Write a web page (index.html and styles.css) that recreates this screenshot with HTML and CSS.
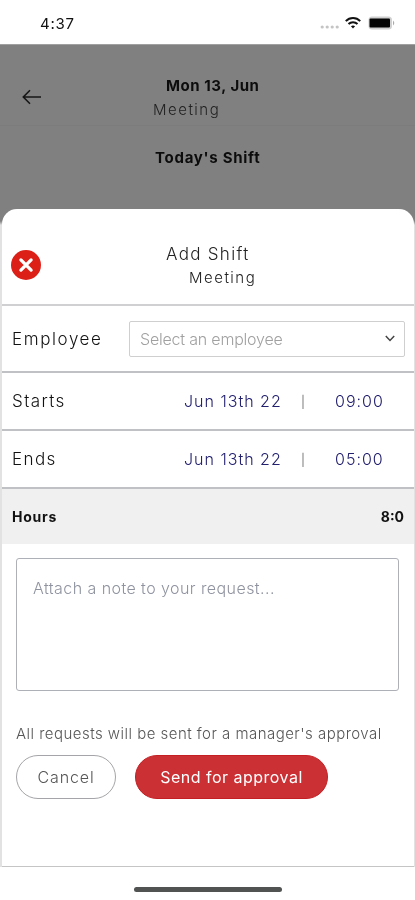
FILE: index.html
```html
<!DOCTYPE html>
<html lang="en">
<head>
<meta charset="utf-8">
<title>Add Shift</title>
<link rel="stylesheet" href="styles.css">
</head>
<body>
<div class="phone">
  <header class="status">
    <span class="clock">4:37</span>
    <div class="status-icons">
      <svg class="signal" width="20" height="14" viewBox="0 0 20 14" fill="#c4c4c4"><circle cx="2.2" cy="11" r="1.6"/><circle cx="7.2" cy="11" r="1.6"/><circle cx="12.2" cy="11" r="1.6"/><circle cx="17.2" cy="11" r="1.6"/></svg>
      <svg class="wifi" width="16" height="14" viewBox="0 0 16 14" fill="none" stroke="#111" stroke-width="2"><path d="M.8 5.1C4.8.9 11.200.9 15.200 5.100"/><path d="M3.500 8C6 5.500 10 5.500 12.500 8"/><path d="M5.900 10.200Q8 8.600 10.100 10.200L8 12.500Z" fill="#111" stroke="none"/></svg>
      <svg class="battery" width="27" height="14" viewBox="0 0 27 14"><rect x=".5" y=".5" width="23.500" height="13" rx="3.500" fill="#d0d0d0"/><path d="M25 4.500q2.500 2.500 0 5z" fill="#aaa"/><rect x="1.500" y="2.500" width="20.500" height="9" rx="1" fill="#050505"/></svg>
    </div>
  </header>
  <main class="screen">
    <div class="topbar">
      <svg class="back" width="20" height="16" viewBox="0 0 20 16" fill="none" stroke="#161616" stroke-width="1.600"><path d="M19 8H1.500M8 1.200 1.300 8 8 14.800"/></svg>
      <div class="topbar-text">
        <div class="day">Mon 13, Jun</div>
        <div class="event">Meeting</div>
      </div>
    </div>
    <div class="today">Today's Shift</div>
    <section class="sheet">
      <div class="sheet-head">
        <svg class="close" width="30" height="30" viewBox="0 0 30 30"><circle cx="15" cy="15" r="15" fill="#dc2018"/><path d="M9.900 9.900 20.100 20.100M20.100 9.900 9.900 20.100" stroke="#fff" stroke-width="3.300" stroke-linecap="round"/></svg>
        <div class="sheet-titles">
          <div class="title">Add Shift</div>
          <div class="subtitle">Meeting</div>
        </div>
      </div>
      <div class="row employee">
        <span class="label l-employee">Employee</span>
        <div class="select"><span>Select an employee</span>
          <svg width="10" height="7" viewBox="0 0 10 7" fill="none" stroke="#444" stroke-width="1.500"><path d="M.8 1 5 5.500 9.200 1"/></svg>
        </div>
      </div>
      <div class="row time-row"><span class="label l-starts">Starts</span><span class="date">Jun 13th 22</span><span class="bar">|</span><span class="time">09:00</span></div>
      <div class="row time-row"><span class="label l-ends">Ends</span><span class="date">Jun 13th 22</span><span class="bar">|</span><span class="time">05:00</span></div>
      <div class="hours"><span class="hours-label">Hours</span><span class="total">8:0</span></div>
      <div class="form">
        <div class="note"><span>Attach a note to your request...</span></div>
        <p class="hint">All requests will be sent for a manager's approval</p>
        <div class="actions">
          <button class="btn cancel">Cancel</button>
          <button class="btn send">Send for approval</button>
        </div>
      </div>
    </section>
  </main>
  <footer class="home"><div class="home-bar"></div></footer>
</div>
</body>
</html>
```
FILE: styles.css
```css
* { box-sizing: border-box; }
body { margin: 0; background: #fff; font-family: Inter, "Liberation Sans", sans-serif; color: #222; }
.phone { width: 415px; height: 900px; display: flex; flex-direction: column; overflow: hidden; white-space: nowrap; will-change: transform; }
.status { height: 44px; display: flex; justify-content: space-between; align-items: flex-start; padding: 14px 20px 0 40px; }
.clock { font-size: 15px; line-height: 19px; letter-spacing: 0.7px; font-weight: 400; color: #111; }
.status-icons { display: flex; padding-top: 2px; }
.wifi { margin-left: 5px; }
.battery { margin-left: 7px; }
.screen { height: 823px; background: linear-gradient(#808080 0 176px, #e2e2e2 180px); border-top: 1px solid #a0a0a0; display: flex; flex-direction: column; }
.topbar { height: 81px; display: flex; border-bottom: 1px solid #7c7c7c; padding-left: 22px; }
.back { margin-top: 44px; }
.topbar-text { padding: 30px 0 0 111px; }
.day { font-size: 15px; line-height: 22px; font-weight: 700; color: #0c0c0c; margin-left: 13px; letter-spacing: 0.55px; }
.event { font-size: 15px; line-height: 25px; font-weight: 300; color: #222; letter-spacing: 1.5px; }
.today { height: 83px; padding: 21px 0 0 155px; font-size: 15px; line-height: 22px; font-weight: 700; color: #0c0c0c; letter-spacing: 0.72px; }
.sheet { flex: 1; margin: 0 1px 0 2px; background: #fff; border-radius: 15px 15px 0 0; border-bottom: 1px solid #c5c5c5; }
.sheet-head { height: 97px; display: flex; border-bottom: 2px solid #d0d0d2; padding-left: 9px; }
.close { margin-top: 41px; }
.sheet-titles { padding: 33px 0 0 125px; }
.title { font-size: 17px; line-height: 24px; font-weight: 300; letter-spacing: 1.3px; }
.subtitle { font-size: 15px; line-height: 24px; font-weight: 300; letter-spacing: 1.5px; margin-left: 23px; }
.row { display: flex; align-items: center; border-bottom: 2px solid #bfc1c5; padding-left: 10px; }
.label { font-size: 17px; font-weight: 300; letter-spacing: 1.4px; color: #111; }
.employee { height: 67px; }
.l-employee { width: 117px; letter-spacing: 1.6px; }
.select { width: 276px; height: 36px; border: 1px solid #cfcfcf; border-radius: 2px; display: flex; align-items: center; justify-content: space-between; padding: 0 9px 0 10px; font-size: 16px; font-weight: 300; color: #a0a0a0; letter-spacing: -0.2px; }
.time-row { height: 58px; }
.l-starts, .l-ends { width: 172px; }
.date, .time { font-size: 16px; font-weight: 300; color: #23206e; letter-spacing: 1px; }
.date { width: 117px; }
.bar { width: 34px; font-size: 12px; color: #777; }
.hours { height: 55px; background: #f0f0f0; display: flex; align-items: center; justify-content: space-between; padding: 0 10px; font-size: 14px; font-weight: 700; color: #111; }
.hours-label { letter-spacing: 0.75px; }
.form { padding: 14px 15px 0 14px; }
.note { height: 133px; border: 1px solid #aeb0b8; border-radius: 3px; padding: 17px 16px; font-size: 16px; line-height: 24px; font-weight: 300; color: #8f939f; letter-spacing: 0.43px; }
.hint { margin: 31px 0 10px; font-size: 15px; line-height: 23px; font-weight: 300; color: #555; letter-spacing: 0.47px; }
.actions { display: flex; gap: 19px; }
.btn { height: 44px; border-radius: 22px; font-family: inherit; font-size: 16px; font-weight: 300; padding: 0; }
.cancel { width: 100px; background: #fff; border: 1px solid #a5a5a9; color: #555; letter-spacing: 0.9px; }
.send { width: 193px; background: #cb3034; border: 1px solid #c42024; color: #fff; font-weight: 400; letter-spacing: 0.48px; }
.home { flex: 1; display: flex; justify-content: center; padding-top: 20px; }
.home-bar { width: 148px; height: 5px; border-radius: 3px; background: #505352; }
```
